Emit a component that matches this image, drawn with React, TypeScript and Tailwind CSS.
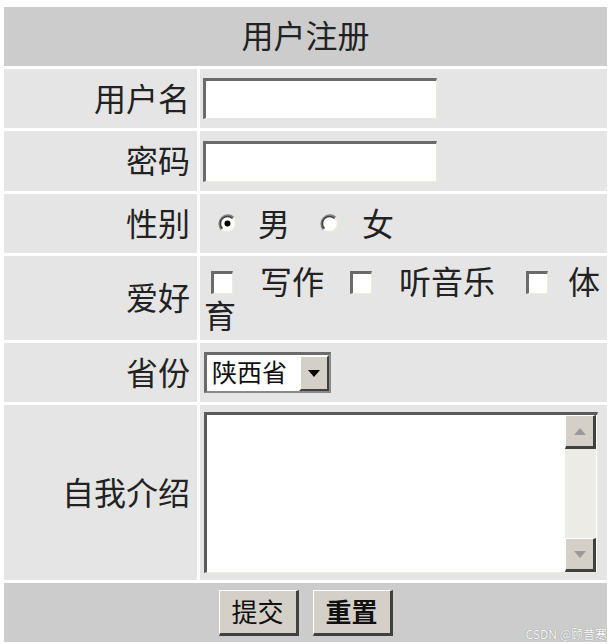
import React from "react";

const font = { fontFamily: '"Noto Sans CJK SC", "Noto Sans", sans-serif' };

function Radio({ checked }: { checked?: boolean }) {
  return (
    <svg width="19" height="19" viewBox="0 0 19 19" className="inline-block align-middle">
      <circle cx="9.5" cy="9.5" r="8.5" fill="#ffffff" />
      <path d="M3.5 15.5 A8.5 8.5 0 0 1 15.5 3.5" fill="none" stroke="#808080" strokeWidth="2" />
      <path d="M4.5 14.5 A7 7 0 0 1 14.5 4.5" fill="none" stroke="#404040" strokeWidth="1.5" />
      <path d="M15.5 3.5 A8.5 8.5 0 0 1 3.5 15.5" fill="none" stroke="#ece9d8" strokeWidth="1.5" />
      {checked && <circle cx="9.5" cy="9.5" r="3" fill="#000000" />}
    </svg>
  );
}

function Checkbox() {
  return (
    <span className="inline-block align-middle w-[22px] h-[23px] bg-white border-t-[3px] border-l-[3px] border-b border-r border-t-[#6b6b6b] border-l-[#6b6b6b] border-b-[#ece9d8] border-r-[#ece9d8] relative top-[-3px]" />
  );
}

function Label({ children }: { children: React.ReactNode }) {
  return (
    <div className="bg-[#e5e5e5] flex items-center justify-end pr-[7px] pb-[4px] text-[32px] text-[#222222]">
      {children}
    </div>
  );
}

export default function App() {
  return (
    <div className="bg-white w-[612px] h-[644px] pt-[7px] pl-[4px] relative" style={font}>
      <div className="w-[603px] grid grid-cols-[193px_407px] gap-[3px] grid-rows-[59px_59px_60px_59px_84px_59px_175px_59px]">
        <div className="col-span-2 bg-[#cccccc] flex items-center justify-center pb-[5px] text-[32px] text-[#222222]">
          用户注册
        </div>

        <Label>用户名</Label>
        <div className="bg-[#e5e5e5] flex items-center pl-[3px]">
          <div className="w-[234px] h-[41px] bg-white border-t-[3px] border-l-[3px] border-b border-r border-t-[#6b6b6b] border-l-[#6b6b6b] border-b-[#ece9d8] border-r-[#ece9d8]" />
        </div>

        <Label>密码</Label>
        <div className="bg-[#e5e5e5] flex items-center pl-[3px]">
          <div className="w-[234px] h-[41px] bg-white border-t-[3px] border-l-[3px] border-b border-r border-t-[#6b6b6b] border-l-[#6b6b6b] border-b-[#ece9d8] border-r-[#ece9d8]" />
        </div>

        <Label>性别</Label>
        <div className="bg-[#e5e5e5] flex items-center pb-[4px] text-[32px] text-[#222222]">
          <span className="ml-[18px] flex items-center pt-[4px]"><Radio checked /></span>
          <span className="ml-[21px]">男</span>
          <span className="ml-[30px] flex items-center pt-[4px]"><Radio /></span>
          <span className="ml-[23px]">女</span>
        </div>

        <Label>爱好</Label>
        <div className="bg-[#e5e5e5] pl-[4px] pt-[7px] text-[32px] leading-[34px] text-[#222222]">
          <span className="ml-[7px]"><Checkbox /></span>
          <span className="ml-[27px]">写作</span>
          <span className="ml-[26px]"><Checkbox /></span>
          <span className="ml-[27px]">听音乐</span>
          <span className="ml-[31px]"><Checkbox /></span>
          <span className="ml-[20px]">体</span>
          <span>育</span>
        </div>

        <Label>省份</Label>
        <div className="bg-[#e5e5e5] flex items-center pl-[4px]">
          <div className="w-[127px] h-[41px] bg-white flex items-stretch border-t-[3px] border-l-[3px] border-b-2 border-r-2 border-t-[#6b6b6b] border-l-[#6b6b6b] border-b-[#8a8a8a] border-r-[#8a8a8a]">
            <span className="flex-1 flex items-center pl-[5px] pb-[2px] text-[25px] text-[#111111]">陕西省</span>
            <span className="w-[30px] bg-[#d4d0c8] flex items-center justify-center border-t-2 border-l-2 border-t-white border-l-white border-b-2 border-r-2 border-b-[#404040] border-r-[#404040]">
              <svg width="12" height="7" viewBox="0 0 12 7"><path d="M0 0 H12 L6 7 Z" fill="#000000" /></svg>
            </span>
          </div>
        </div>

        <Label>自我介绍</Label>
        <div className="bg-[#e5e5e5] flex items-center pl-[4px]">
          <div className="w-[394px] h-[161px] bg-white flex justify-end border-t-[3px] border-l-[3px] border-b border-r border-t-[#5a5a5a] border-l-[#5a5a5a] border-b-[#ece9d8] border-r-[#ece9d8] pr-[1px]">
            <div className="w-[31px] flex flex-col bg-[#ecebe6]">
              <div className="h-[34px] bg-[#d4d0c8] flex items-center justify-center border-t border-l border-t-white border-l-white border-b-[3px] border-r-[3px] border-b-[#404040] border-r-[#404040]">
                <svg width="12" height="7" viewBox="0 0 12 7"><path d="M0 7 H12 L6 0 Z" fill="#9a9a9a" /></svg>
              </div>
              <div className="flex-1" />
              <div className="h-[34px] bg-[#d4d0c8] flex items-center justify-center border-t border-l border-t-white border-l-white border-b-[3px] border-r-[3px] border-b-[#404040] border-r-[#404040]">
                <svg width="12" height="7" viewBox="0 0 12 7"><path d="M0 0 H12 L6 7 Z" fill="#9a9a9a" /></svg>
              </div>
            </div>
          </div>
        </div>

        <div className="col-span-2 bg-[#cccccc] flex items-center justify-center gap-[14px]">
          <div className="w-[80px] h-[46px] bg-[#d4d0c8] flex items-center justify-center pb-[3px] text-[26px] text-[#111111] border-t border-l border-t-white border-l-white border-b-[3px] border-r-[3px] border-b-[#404040] border-r-[#404040]">
            提交
          </div>
          <div className="w-[80px] h-[46px] bg-[#d4d0c8] flex items-center justify-center pb-[3px] text-[26px] text-[#111111] font-bold border-t border-l border-t-white border-l-white border-b-[3px] border-r-[3px] border-b-[#404040] border-r-[#404040]">
            重置
          </div>
        </div>
      </div>
      <div className="absolute right-[5px] bottom-[3px] text-[12px] leading-[14px] text-white [text-shadow:0_0_1px_#666]">
        CSDN @顾昔寒
      </div>
    </div>
  );
}
